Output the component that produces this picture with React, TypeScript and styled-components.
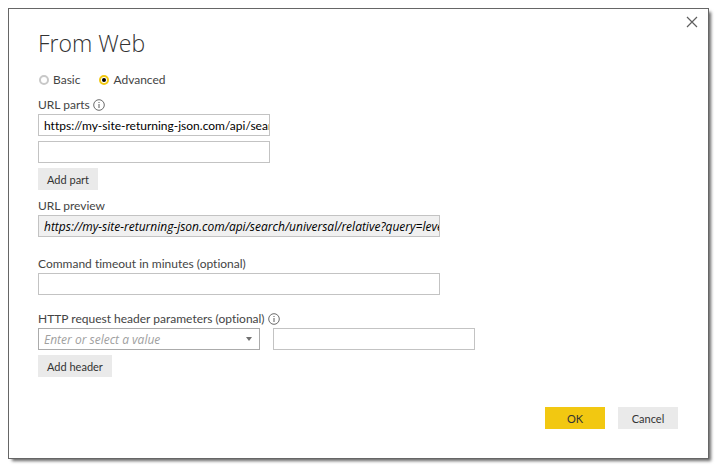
import React, { useState } from "react";
import styled, { createGlobalStyle, css } from "styled-components";

const GlobalStyle = createGlobalStyle`
  *, *::before, *::after { box-sizing: border-box; }
  body { margin: 0; background: #fff; }
  body, input, button, select {
    font-family: Lato, "Open Sans", sans-serif;
    font-size: 12px;
    font-variant-ligatures: none;
  }
`;

const Page = styled.main`
  padding: 8px 9px 10px 8px;
`;

const Dialog = styled.form`
  position: relative;
  display: flex;
  flex-direction: column;
  padding: 18px 30px 29px 29px;
  background: #fff;
  border: 1px solid #666;
  box-shadow: 3px 3px 3px -1px rgba(0, 0, 0, 0.6);
  color: #444;
`;

const CloseButton = styled.button`
  position: absolute;
  top: 4px;
  right: 7px;
  display: flex;
  padding: 3px;
  border: 0;
  background: none;
  color: #5f5f5f;
  cursor: pointer;
`;

const Title = styled.h1`
  margin: 0;
  color: #333;
  font-family: "Open Sans", sans-serif;
  font-size: 23px;
  font-weight: 300;
  line-height: 32px;
`;

const ModeGroup = styled.div`
  display: flex;
  gap: 18px;
  margin-top: 13px;
`;

const ModeLabel = styled.label`
  display: flex;
  align-items: center;
  gap: 4px;
  height: 16px;
  line-height: 16px;
`;

const Radio = styled.input`
  appearance: none;
  display: grid;
  place-items: center;
  width: 10px;
  height: 10px;
  margin: 0 0 0 1px;
  border: 2px solid #c8c8c8;
  border-radius: 50%;
  background: #fff;

  &:checked { border-color: #f2c811; }
  &:checked::before {
    content: "";
    width: 4px;
    height: 4px;
    border-radius: 50%;
    background: #000;
  }
`;

const Field = styled.section<{ $gap: number }>`
  display: flex;
  flex-direction: column;
  align-items: flex-start;
  gap: 5px;
  margin-top: ${(p) => p.$gap}px;
`;

const FieldLabel = styled.label`
  display: flex;
  align-items: center;
  gap: 3px;
  height: 18px;
  margin-bottom: -5px;
  line-height: 18px;
  white-space: nowrap;
`;

const control = css`
  height: 22px;
  padding: 0 0 0 5px;
  border: 1px solid #c3c3c3;
  border-radius: 0;
  background: #fff;
  color: #000;
`;

const italicText = css`
  font-family: "Open Sans", sans-serif;
  font-style: italic;
`;

const TextBox = styled.input<{ $width: number }>`
  ${control}
  width: ${(p) => p.$width}px;
  max-width: 100%;

  &:read-only {
    ${italicText}
    background: #f0f0f0;
  }
`;

const HeaderRow = styled.div`
  display: flex;
  gap: 13px;
  max-width: 100%;
`;

const SelectFrame = styled.div`
  position: relative;
  width: 222px;
`;

const Select = styled.select`
  ${control}
  ${italicText}
  appearance: none;
  display: block;
  width: 100%;
  border-color: #ababab;
  color: #a0a0a0;
`;

const SelectArrow = styled.svg`
  position: absolute;
  top: 9px;
  right: 8px;
  pointer-events: none;
`;

const Button = styled.button`
  height: 22px;
  padding: 0 9px;
  border: 0;
  background: #eaeaea;
  color: #333;
  font-size: 11px;
  cursor: pointer;
`;

const FooterButton = styled(Button)<{ $primary?: boolean }>`
  width: 60px;
  padding: 0;
  background: ${(p) => (p.$primary ? "#f2c811" : "#eaeaea")};
`;

const Footer = styled.footer`
  display: flex;
  justify-content: flex-end;
  gap: 13px;
  margin-top: 30px;
`;

const InfoIcon = () => (
  <svg width="12" height="12" viewBox="0 0 12 12" fill="none" stroke="#5a5a5a" aria-hidden="true">
    <circle cx="6" cy="6" r="5.3" strokeWidth="0.9" />
    <path d="M6 5v4M6 3v1" />
  </svg>
);

const initialPart = "https://my-site-returning-json.com/api/search/universal/relative";
const previewUrl = "https://my-site-returning-json.com/api/search/universal/relative?query=level";

export default function App() {
  const [mode, setMode] = useState("advanced");

  return (
    <Page>
      <GlobalStyle />
      <Dialog role="dialog" aria-labelledby="title" onSubmit={(e) => e.preventDefault()}>
        <CloseButton type="button" aria-label="Close">
          <svg width="12" height="12" viewBox="0 0 12 12" stroke="currentColor" strokeWidth="1.2">
            <path d="M1 1l10 10M11 1L1 11" />
          </svg>
        </CloseButton>
        <Title id="title">From Web</Title>

        <ModeGroup role="radiogroup" aria-label="Mode">
          <ModeLabel>
            <Radio type="radio" name="mode" checked={mode === "basic"} onChange={() => setMode("basic")} />
            Basic
          </ModeLabel>
          <ModeLabel>
            <Radio type="radio" name="mode" checked={mode === "advanced"} onChange={() => setMode("advanced")} />
            Advanced
          </ModeLabel>
        </ModeGroup>

        <Field $gap={8}>
          <FieldLabel htmlFor="part-1">
            URL parts
            <InfoIcon />
          </FieldLabel>
          <TextBox id="part-1" $width={232} defaultValue={initialPart} />
          <TextBox aria-label="URL part 2" $width={232} />
          <Button type="button">Add part</Button>
        </Field>

        <Field $gap={7}>
          <FieldLabel htmlFor="preview">URL preview</FieldLabel>
          <TextBox id="preview" $width={402} value={previewUrl} readOnly />
        </Field>

        <Field $gap={18}>
          <FieldLabel htmlFor="timeout">Command timeout in minutes (optional)</FieldLabel>
          <TextBox id="timeout" $width={402} />
        </Field>

        <Field $gap={15}>
          <FieldLabel htmlFor="header-name">
            HTTP request header parameters (optional)
            <InfoIcon />
          </FieldLabel>
          <HeaderRow>
            <SelectFrame>
              <Select id="header-name" defaultValue="">
                <option value="">Enter or select a value</option>
              </Select>
              <SelectArrow width="6" height="4" viewBox="0 0 6 4" aria-hidden="true">
                <path d="M0 0h6L3 4z" fill="#707070" />
              </SelectArrow>
            </SelectFrame>
            <TextBox aria-label="Header value" $width={202} />
          </HeaderRow>
          <Button type="button">Add header</Button>
        </Field>

        <Footer>
          <FooterButton type="submit" $primary>
            OK
          </FooterButton>
          <FooterButton type="button">Cancel</FooterButton>
        </Footer>
      </Dialog>
    </Page>
  );
}
